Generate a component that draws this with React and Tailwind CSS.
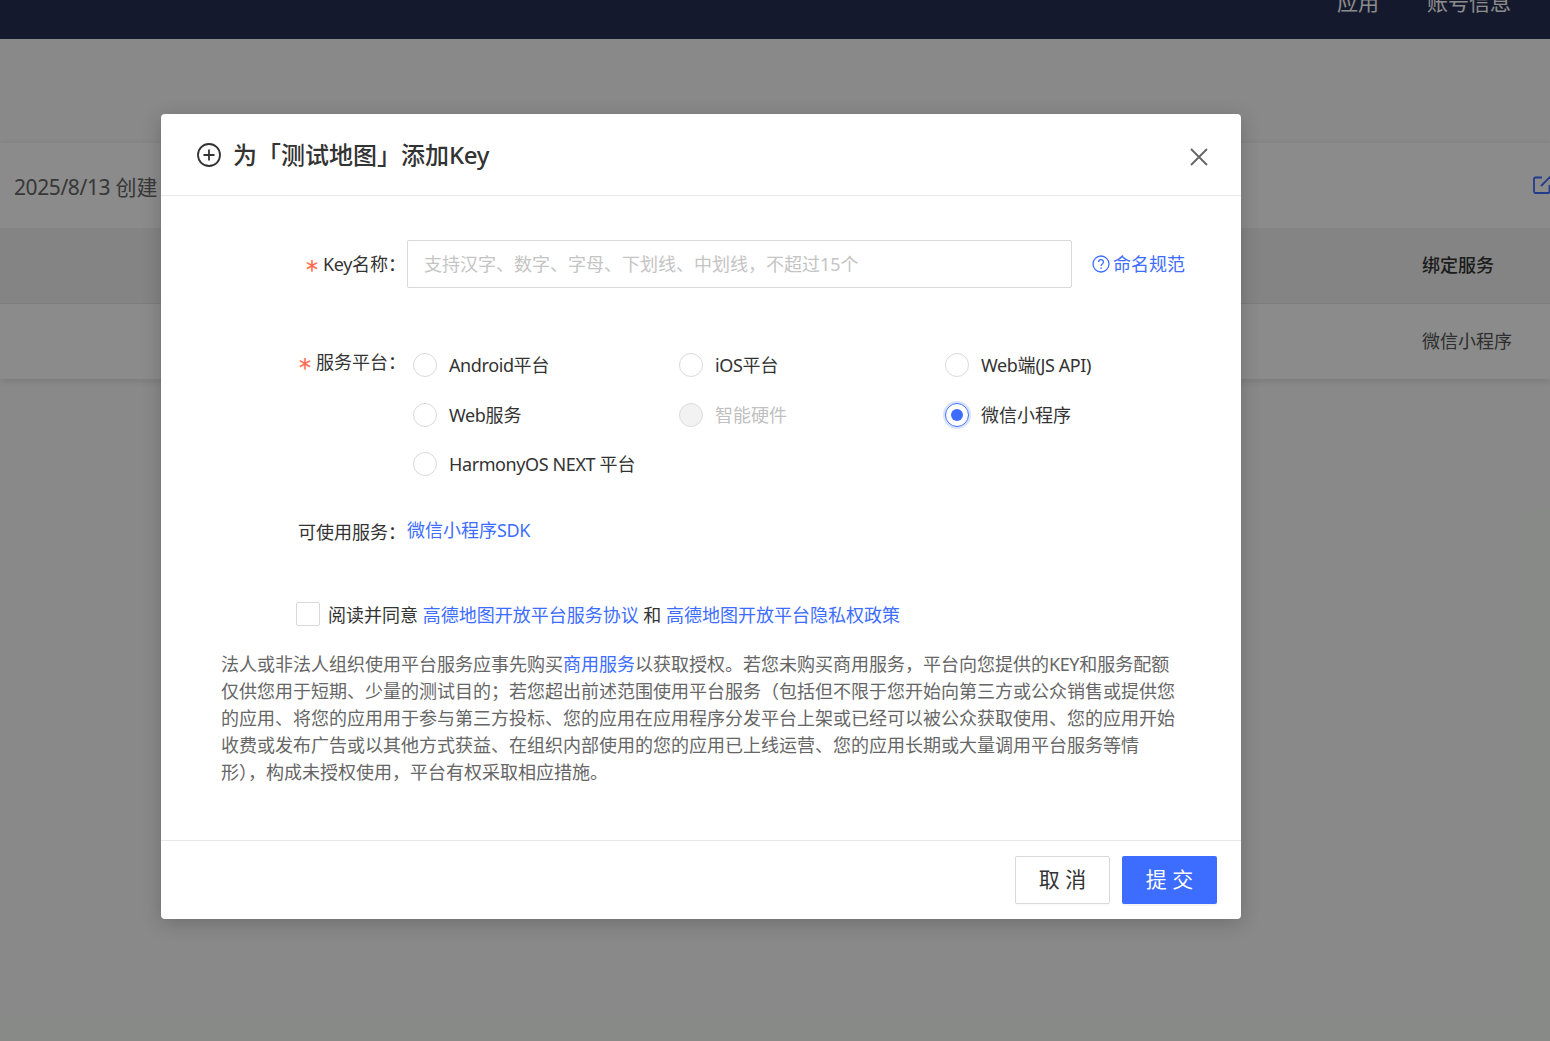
import React from "react";

const L = ({ children }) => <span className="tracking-[-0.4px]">{children}</span>;

const Radio = ({ label, checked, disabled }) => (
  <label className="flex items-center h-6 w-[266px]">
    <span
      className={
        "w-6 h-6 rounded-full border flex items-center justify-center shrink-0 " +
        (checked
          ? "border-[#3d6dff] shadow-[0_0_0_2px_rgba(61,109,255,0.2)]"
          : disabled
          ? "border-[#dcdcdc] bg-[#f2f2f2]"
          : "border-[#d9d9d9]")
      }
    >
      {checked && <span className="w-3 h-3 rounded-full bg-[#3d6dff]" />}
    </span>
    <span className={"ml-3 text-[18px] leading-6 whitespace-nowrap " + (disabled ? "text-[#bfbfbf]" : "text-[#333]")}>{label}</span>
  </label>
);

const Star = () => (
  <span className="text-[#ff6a4d] mr-[5px] inline-block align-[-7px] font-['DejaVu_Sans'] text-[24px] leading-none [-webkit-text-stroke:0.2px_#ff6a4d]">*</span>
);

export default function App() {
  return (
    <div className="relative h-[1041px] overflow-hidden bg-[#f8faf8] font-['Noto_Sans','Noto_Sans_CJK_SC',sans-serif]">
      <header className="h-[39px] overflow-hidden bg-[#272f52] flex justify-end items-start pr-[39px] text-[21px] text-white gap-[48px]">
        <span className="leading-6 -mt-[10px]">应用</span>
        <span className="leading-6 -mt-[10px]">账号信息</span>
      </header>

      <main className="mt-[104px] bg-[#fbfdfb] shadow-[0_2px_8px_rgba(0,0,0,0.12)]">
        <div className="h-[85px] pl-[14px] flex items-center justify-between text-[21px] text-[#666] pt-[4px]">
          <span><L>2025/8/13</L> 创建</span>
          <svg className="w-[18px] h-[18px] mr-[-1px] -mt-[5px] text-[#3d6dff]" viewBox="0 0 18 18" fill="none" stroke="currentColor" strokeWidth="1.8">
            <path d="M9 1.5H2.5a1.5 1.5 0 0 0-1.5 1.5v12.5a1.5 1.5 0 0 0 1.5 1.5H15a1.5 1.5 0 0 0 1.5-1.5V9" />
            <path d="M8 10L18 0" />
          </svg>
        </div>
        <div className="h-[76px] bg-[#f0f1f1] border-b border-[#e4e4e4] flex items-center justify-end">
          <span className="w-[128px] text-[18px] font-medium text-[#333]">绑定服务</span>
        </div>
        <div className="h-[75px] flex items-center justify-end">
          <span className="w-[128px] text-[18px] text-[#555]">微信小程序</span>
        </div>
      </main>

      <div className="absolute inset-0 bg-black/45" />

      <div className="absolute left-[161px] top-[114px] w-[1080px] h-[805px] bg-white rounded-[4px] shadow-[0_4px_20px_rgba(0,0,0,0.2)] flex flex-col">
        <div className="h-[82px] border-b border-[#e8e8e8] pl-9 pr-[32px] flex items-center justify-between shrink-0">
          <div className="flex items-center">
            <svg className="w-6 h-6 text-[#333]" viewBox="0 0 24 24" fill="none" stroke="currentColor" strokeWidth="1.8">
              <circle cx="12" cy="12" r="11" />
              <path d="M12 6.5v11M6.5 12h11" />
            </svg>
            <span className="ml-[12px] text-[24px] font-medium text-[#333] leading-8">为「测试地图」添加<L>Key</L></span>
          </div>
          <svg className="w-5 h-5 text-[#666] mt-[5px]" viewBox="0 0 20 20" fill="none" stroke="currentColor" strokeWidth="1.9">
            <path d="M2 2l16 16M18 2L2 18" />
          </svg>
        </div>

        <div className="flex-1 pt-11">
          <div className="flex items-center h-12">
            <div className="w-[246px] pr-[1px] text-right text-[18px] text-[#333] whitespace-nowrap mt-[4px]">
              <Star /><L>Key</L>名称：
            </div>
            <div className="w-[665px] h-12 border border-[#d9d9d9] rounded-[2px] pl-4 flex items-center text-[18px] text-[#c4c4c4] whitespace-nowrap">
              支持汉字、数字、字母、下划线、中划线，不超过15个
            </div>
            <div className="ml-5 flex items-center text-[18px] text-[#3d6dff]">
              <svg className="w-[18px] h-[18px] mr-[3px]" viewBox="0 0 18 18" fill="none" stroke="currentColor" strokeWidth="1.3">
                <circle cx="9" cy="9" r="8" />
                <path d="M6.6 7a2.4 2.4 0 1 1 3.7 2c-.8.5-1.3 1-1.3 2" />
                <path d="M9 12.6v1.3" />
              </svg>
              命名规范
            </div>
          </div>

          <div className="flex mt-[65px]">
            <div className="w-[246px] pr-[1px] text-right text-[18px] leading-6 text-[#333] whitespace-nowrap -mt-[3px]">
              <Star />服务平台：
            </div>
            <div className="ml-[6px] flex flex-wrap gap-y-[25.5px] w-[800px]">
              <Radio label={<><L>Android</L>平台</>} />
              <Radio label={<><L>iOS</L>平台</>} />
              <Radio label={<><L>Web</L>端<L>(JS API)</L></>} />
              <Radio label={<><L>Web</L>服务</>} />
              <Radio label="智能硬件" disabled />
              <Radio label="微信小程序" checked />
              <Radio label={<><L>HarmonyOS NEXT </L>平台</>} />
            </div>
          </div>

          <div className="flex mt-[42px] items-start">
            <div className="w-[246px] pr-[1px] text-right text-[18px] leading-6 text-[#333] whitespace-nowrap mt-[2px]">可使用服务：</div>
            <div className="text-[18px] leading-6 text-[#3d6dff]">微信小程序<L>SDK</L></div>
          </div>

          <div className="flex items-center mt-[58px] ml-[135px] text-[18px] text-[#333]">
            <span className="w-6 h-6 border border-[#d9d9d9] rounded-[2px] mr-2 -mt-[3px]" />
            <span className="whitespace-nowrap">
              阅读并同意 <span className="text-[#3d6dff]">高德地图开放平台服务协议</span> 和 <span className="text-[#3d6dff]">高德地图开放平台隐私权政策</span>
            </span>
          </div>

          <p className="mt-[22px] ml-[60px] w-[960px] text-[18px] leading-[27px] text-[#666]">
            法人或非法人组织使用平台服务应事先购买<span className="text-[#3d6dff]">商用服务</span>以获取授权。若您未购买商用服务，平台向您提供的<L>KEY</L>和服务配额仅供您用于短期、少量的测试目的；若您超出前述范围使用平台服务（包括但不限于您开始向第三方或公众销售或提供您的应用、将您的应用用于参与第三方投标、您的应用在应用程序分发平台上架或已经可以被公众获取使用、您的应用开始收费或发布广告或以其他方式获益、在组织内部使用的您的应用已上线运营、您的应用长期或大量调用平台服务等情形），构成未授权使用，平台有权采取相应措施。
          </p>
        </div>

        <div className="h-[79px] border-t border-[#e8e8e8] pr-6 flex items-center justify-end gap-3 shrink-0 pb-[1px]">
          <button className="w-[95px] h-12 border border-[#d9d9d9] rounded-[2px] bg-white text-[21px] text-[#333] shadow-[0_2px_0_rgba(0,0,0,0.02)]">取 消</button>
          <button className="w-[95px] h-12 rounded-[2px] bg-[#3d6dff] text-[21px] text-white shadow-[0_2px_0_rgba(0,0,0,0.04)]">提 交</button>
        </div>
      </div>
    </div>
  );
}
